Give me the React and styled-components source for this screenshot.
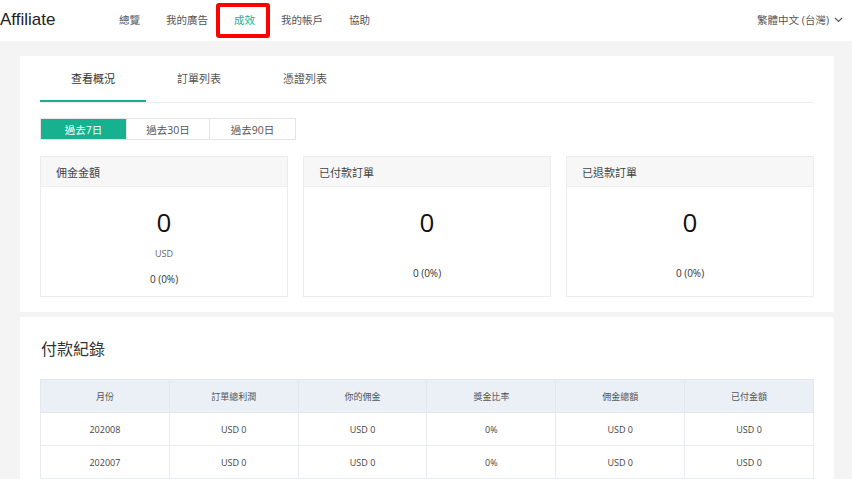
import styled, { createGlobalStyle } from "styled-components";

const GlobalStyle = createGlobalStyle`
  html, body {
    margin: 0;
    padding: 0;
    background: #f4f4f4;
    font-family: "Open Sans", "Noto Sans CJK TC", sans-serif;
    color: #333;
  }
`;

const teal = "#17b18f";

const Header = styled.header`
  height: 41px;
  background: #fff;
  display: flex;
  align-items: center;
  padding-right: 9px;
`;

const Logo = styled.div`
  font-family: "Liberation Sans", "Noto Sans CJK TC", sans-serif;
  font-size: 17px;
  color: #222;
  width: 119px;
  margin-top: -2px;
`;

const Nav = styled.nav`
  display: flex;
  gap: 26px;
  flex: 1;
  margin-top: -2px;
`;

const NavItem = styled.span`
  position: relative;
  font-size: 10.5px;
  line-height: 14px;
  color: ${(p) => (p.$active ? teal : "#555")};

  ${(p) =>
    p.$active &&
    `
    &::after {
      content: "";
      position: absolute;
      left: -18px;
      right: -15px;
      top: -10px;
      bottom: -11px;
      border: 4px solid #f00;
      border-radius: 3px;
    }
  `}
`;

const Lang = styled.div`
  display: flex;
  align-items: center;
  gap: 5px;
  font-size: 10.5px;
  color: #555;
  margin-top: -2px;
`;

const Main = styled.main`
  padding: 15px 18px 0 20px;
  display: flex;
  flex-direction: column;
  gap: 5px;
`;

const Card = styled.section`
  background: #fff;
  padding: ${(p) => p.$pad || "0 20px 15px"};
`;

const Tabs = styled.div`
  display: flex;
  border-bottom: 1px solid #eee;
`;

const Tab = styled.div`
  width: 106px;
  height: 44px;
  display: flex;
  align-items: center;
  justify-content: center;
  font-size: 11px;
  color: ${(p) => (p.$active ? "#333" : "#555")};
  border-bottom: 2px solid ${(p) => (p.$active ? teal : "transparent")};
`;

const Segments = styled.div`
  display: flex;
  margin-top: 15px;
  width: fit-content;
  border: 1px solid #e4e4e4;
`;

const Segment = styled.div`
  height: 20px;
  width: ${(p) => p.$w}px;
  display: flex;
  align-items: center;
  justify-content: center;
  font-size: 10.5px;
  background: ${(p) => (p.$active ? teal : "#fff")};
  color: ${(p) => (p.$active ? "#fff" : "#555")};
  & + & {
    border-left: 1px solid #e4e4e4;
  }
`;

const Stats = styled.div`
  display: grid;
  grid-template-columns: repeat(3, 1fr);
  gap: 15px;
  margin-top: 16px;
`;

const StatBox = styled.div`
  border: 1px solid #ececec;
  height: 139px;
  display: flex;
  flex-direction: column;
`;

const StatHead = styled.div`
  height: 29px;
  background: #f7f7f7;
  border-bottom: 1px solid #eee;
  display: flex;
  align-items: center;
  padding-left: 15px;
  font-size: 11px;
  color: #444;
`;

const StatBody = styled.div`
  flex: 1;
  display: flex;
  flex-direction: column;
  align-items: center;
  padding-top: 19px;
`;

const BigNum = styled.div`
  font-size: 26px;
  line-height: 32px;
  color: #111;
`;

const Unit = styled.div`
  font-size: 9px;
  color: #666;
  margin-top: 10px;
  line-height: 12px;
`;

const Pct = styled.div`
  font-size: 10px;
  color: #333;
  margin-top: ${(p) => (p.$tight ? "12px" : "28px")};
`;

const Title = styled.h2`
  margin: 0;
  padding: 20px 0 0 1px;
  height: 42px;
  font-size: 16px;
  font-weight: 400;
  color: #333;
  line-height: 24px;
`;

const Table = styled.table`
  width: 100%;
  border-collapse: collapse;
  table-layout: fixed;
`;

const Th = styled.th`
  height: 32px;
  padding: 0;
  background: #ebf0f7;
  font-weight: 400;
  font-size: 9px;
  color: #555;
  border: 1px solid #e3e8ef;
`;

const Td = styled.td`
  height: 32px;
  padding: 0;
  text-align: center;
  font-size: 9px;
  color: #444;
  border: 1px solid #e8ecf1;
`;

const cols = ["月份", "訂單總利潤", "你的佣金", "獎金比率", "佣金總額", "已付金額"];
const rows = [
  ["202008", "USD 0", "USD 0", "0%", "USD 0", "USD 0"],
  ["202007", "USD 0", "USD 0", "0%", "USD 0", "USD 0"],
];

const stats = [
  { title: "佣金金額", unit: "USD" },
  { title: "已付款訂單" },
  { title: "已退款訂單" },
];

export default function App() {
  return (
    <>
      <GlobalStyle />
      <Header>
        <Logo>Affiliate</Logo>
        <Nav>
          <NavItem>總覽</NavItem>
          <NavItem>我的廣告</NavItem>
          <NavItem $active>成效</NavItem>
          <NavItem>我的帳戶</NavItem>
          <NavItem>協助</NavItem>
        </Nav>
        <Lang>
          繁體中文 (台灣)
          <svg width="9" height="6" viewBox="0 0 9 6">
            <path d="M1 1l3.5 3.5L8 1" fill="none" stroke="#555" strokeWidth="1.1" />
          </svg>
        </Lang>
      </Header>
      <Main>
        <Card>
          <Tabs>
            <Tab $active>查看概況</Tab>
            <Tab>訂單列表</Tab>
            <Tab>憑證列表</Tab>
          </Tabs>
          <Segments>
            <Segment $active $w={85}>過去7日</Segment>
            <Segment $w={82}>過去30日</Segment>
            <Segment $w={85}>過去90日</Segment>
          </Segments>
          <Stats>
            {stats.map((s) => (
              <StatBox key={s.title}>
                <StatHead>{s.title}</StatHead>
                <StatBody>
                  <BigNum>0</BigNum>
                  {s.unit && <Unit>{s.unit}</Unit>}
                  <Pct $tight={!!s.unit}>0 (0%)</Pct>
                </StatBody>
              </StatBox>
            ))}
          </Stats>
        </Card>
        <Card $pad="0 20px 20px">
          <Title>付款紀錄</Title>
          <Table>
            <thead>
              <tr>
                {cols.map((c) => (
                  <Th key={c}>{c}</Th>
                ))}
              </tr>
            </thead>
            <tbody>
              {rows.map((r) => (
                <tr key={r[0]}>
                  {r.map((v, i) => (
                    <Td key={i}>{v}</Td>
                  ))}
                </tr>
              ))}
            </tbody>
          </Table>
        </Card>
      </Main>
    </>
  );
}
